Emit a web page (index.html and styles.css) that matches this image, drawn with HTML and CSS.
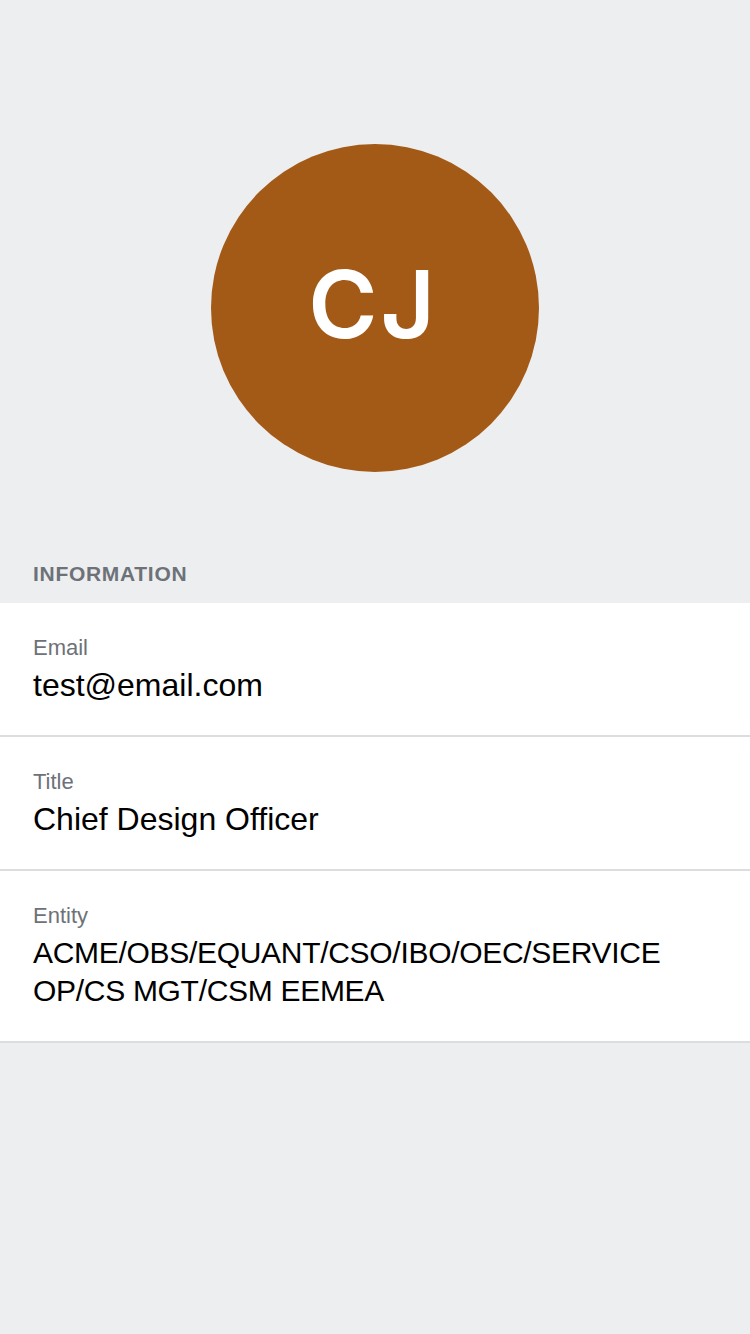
FILE: index.html
```html
<!DOCTYPE html>
<html lang="en">
<head>
<meta charset="utf-8">
<title>Profile</title>
<link rel="stylesheet" href="styles.css">
</head>
<body>
<div class="page">
  <div class="hero">
    <div class="avatar"><span class="initials">CJ</span></div>
  </div>
  <div class="section-header">INFORMATION</div>
  <div class="list">
    <div class="row">
      <div class="label">Email</div>
      <div class="value">test@email.com</div>
    </div>
    <div class="row">
      <div class="label">Title</div>
      <div class="value">Chief Design Officer</div>
    </div>
    <div class="row">
      <div class="label">Entity</div>
      <div class="value value-entity">ACME/OBS/EQUANT/CSO/IBO/OEC/SERVICE OP/CS MGT/CSM EEMEA</div>
    </div>
  </div>
</div>
</body>
</html>
```
FILE: styles.css
```css
html, body {
  margin: 0;
  padding: 0;
  background: #edeef0;
}
body {
  font-family: "Liberation Sans", Arial, sans-serif;
  width: 750px;
  min-height: 1334px;
}
.page {
  display: flex;
  flex-direction: column;
}
.hero {
  display: flex;
  justify-content: center;
  padding-top: 144px;
}
.avatar {
  width: 328px;
  height: 328px;
  border-radius: 50%;
  background: #a45a17;
  display: flex;
  align-items: center;
  justify-content: center;
  box-sizing: border-box;
  padding-bottom: 8px;
}
.initials {
  color: #ffffff;
  font-family: Inter, "Liberation Sans", sans-serif;
  font-weight: 600;
  font-size: 94px;
  line-height: 94px;
  letter-spacing: 3px;
  padding-right: 4px;
}
.section-header {
  margin-top: 90px;
  padding: 0 33px 17px;
  font-size: 21px;
  line-height: 24px;
  font-weight: 700;
  letter-spacing: 0.7px;
  color: #6d7278;
}
.list {
  background: #ffffff;
}
.row {
  padding: 32px 33px 31px;
  border-bottom: 2px solid #dcdde0;
  display: flex;
  flex-direction: column;
  gap: 5px;
}
.label {
  font-size: 22px;
  line-height: 26px;
  color: #6d7278;
}
.value {
  font-size: 32px;
  line-height: 38px;
  color: #000000;
}
.value-entity {
  font-size: 30px;
  line-height: 38px;
  letter-spacing: -0.3px;
}
```
